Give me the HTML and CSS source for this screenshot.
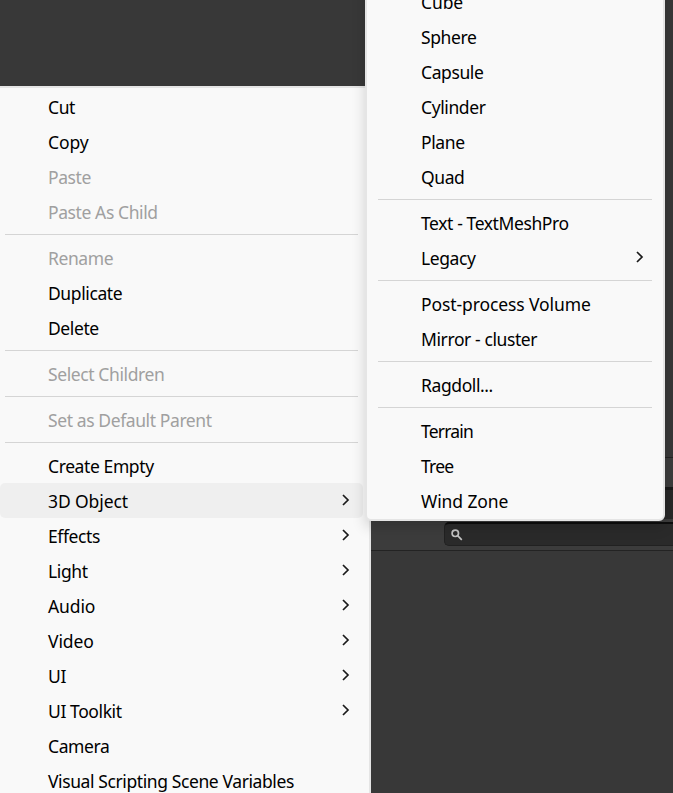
FILE: index.html
```html
<!DOCTYPE html>
<html lang="en">
<head>
<meta charset="utf-8">
<title>Hierarchy context menu</title>
<link rel="stylesheet" href="styles.css">
</head>
<body>
<div class="editor">
  <div class="scene"></div>
  <div class="tabs"></div>
  <div class="panel-gap"></div>
  <div class="tab-strip"></div>
  <div class="toolbar">
    <div class="search"><svg width="12" height="12" viewBox="0 0 12 12"><circle cx="4.3" cy="4.3" r="3.2"/><path d="M6.6 6.6 10.8 10.8"/></svg></div>
  </div>
</div>
<ul class="menu context">
  <li class="item"><span>Cut</span></li>
  <li class="item loose"><span>Copy</span></li>
  <li class="item disabled"><span>Paste</span></li>
  <li class="item disabled"><span>Paste As Child</span></li>
  <li class="separator"></li>
  <li class="item disabled"><span>Rename</span></li>
  <li class="item"><span>Duplicate</span></li>
  <li class="item"><span>Delete</span></li>
  <li class="separator"></li>
  <li class="item disabled"><span>Select Children</span></li>
  <li class="separator"></li>
  <li class="item disabled"><span>Set as Default Parent</span></li>
  <li class="separator"></li>
  <li class="item"><span>Create Empty</span></li>
  <li class="item active loose"><span>3D Object</span><svg class="chevron" viewBox="0 0 8 12"><path d="M1 1 6 6 1 11"/></svg></li>
  <li class="item"><span>Effects</span><svg class="chevron" viewBox="0 0 8 12"><path d="M1 1 6 6 1 11"/></svg></li>
  <li class="item"><span>Light</span><svg class="chevron" viewBox="0 0 8 12"><path d="M1 1 6 6 1 11"/></svg></li>
  <li class="item loose"><span>Audio</span><svg class="chevron" viewBox="0 0 8 12"><path d="M1 1 6 6 1 11"/></svg></li>
  <li class="item loose"><span>Video</span><svg class="chevron" viewBox="0 0 8 12"><path d="M1 1 6 6 1 11"/></svg></li>
  <li class="item"><span>UI</span><svg class="chevron" viewBox="0 0 8 12"><path d="M1 1 6 6 1 11"/></svg></li>
  <li class="item"><span>UI Toolkit</span><svg class="chevron" viewBox="0 0 8 12"><path d="M1 1 6 6 1 11"/></svg></li>
  <li class="item"><span>Camera</span></li>
  <li class="item"><span>Visual Scripting Scene Variables</span></li>
</ul>
<ul class="menu submenu">
  <li class="item loose"><span>Cube</span></li>
  <li class="item"><span>Sphere</span></li>
  <li class="item"><span>Capsule</span></li>
  <li class="item"><span>Cylinder</span></li>
  <li class="item"><span>Plane</span></li>
  <li class="item"><span>Quad</span></li>
  <li class="separator"></li>
  <li class="item"><span>Text - TextMeshPro</span></li>
  <li class="item"><span>Legacy</span><svg class="chevron" viewBox="0 0 8 12"><path d="M1 1 6 6 1 11"/></svg></li>
  <li class="separator"></li>
  <li class="item loose"><span>Post-process Volume</span></li>
  <li class="item"><span>Mirror - cluster</span></li>
  <li class="separator"></li>
  <li class="item"><span>Ragdoll...</span></li>
  <li class="separator"></li>
  <li class="item tight"><span>Terrain</span></li>
  <li class="item tight"><span>Tree</span></li>
  <li class="item loose"><span>Wind Zone</span></li>
</ul>
</body>
</html>
```
FILE: styles.css
```css
* { box-sizing: border-box; }
body {
  margin: 0;
  width: 673px;
  height: 793px;
  position: relative;
  overflow: hidden;
  background: #383838;
  font-family: "Noto Sans", "Open Sans", sans-serif;
  font-size: 17.5px;
  letter-spacing: -0.4px;
  color: #000;
}
.editor { display: flex; flex-direction: column; height: 793px; }
.scene { height: 457px; }
.tabs { height: 30px; background: #3c3c3c; border-top: 1px solid #232323; }
.panel-gap { height: 3px; background: #191919; }
.tab-strip { height: 29px; background: #282828; }
.toolbar {
  height: 32px;
  padding: 3px 0 4px 444px;
  background: #3c3c3c;
  border-bottom: 1px solid #232323;
}
.search {
  height: 24px;
  padding: 5px 0 0 6px;
  background: #2a2a2a;
  border: 1px solid #212121;
  border-top: 2px solid #0d0d0d;
  border-right: 0;
  border-radius: 5px 0 0 5px;
}
.search svg { display: block; fill: none; stroke: #c4c4c4; stroke-width: 1.7; }
.menu {
  position: absolute;
  margin: 0;
  list-style: none;
  background: #f9f9f9;
  border: 2px solid #e5e5e5;
}
.context {
  left: 0;
  top: 86px;
  width: 371px;
  height: 707px;
  padding: 1px 6px 0 0;
  border-left: 0;
  border-bottom: 0;
  overflow: hidden;
}
.submenu {
  left: 365px;
  top: -19px;
  width: 300px;
  height: 540px;
  padding: 1px 6px 0;
  border-radius: 6px;
  box-shadow: 0 6px 14px rgba(0, 0, 0, .16);
}
.item {
  display: flex;
  justify-content: space-between;
  align-items: center;
  height: 35px;
  padding: 0 13px 0 48px;
  border-radius: 5px;
  white-space: nowrap;
}
.item span { line-height: 33px; padding-top: 2px; }
.loose { letter-spacing: -0.1px; }
.tight { letter-spacing: -0.8px; }
.active { background: #efefef; }
.disabled { color: #a0a0a0; }
.separator {
  height: 1px;
  margin: 5px;
  background: #d5d5d5;
}
.chevron {
  width: 8px;
  height: 12px;
  margin-bottom: 2px;
  fill: none;
  stroke: #1a1a1a;
  stroke-width: 1.7;
}
```
